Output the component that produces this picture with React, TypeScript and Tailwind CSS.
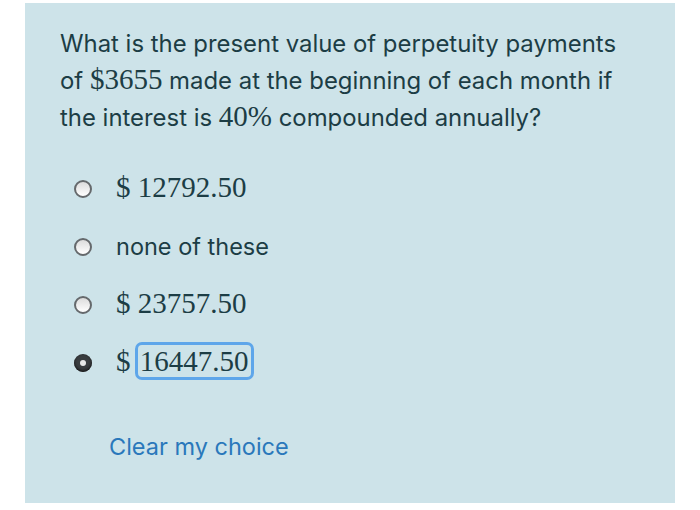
import React from "react";

const Num = ({ children }: { children: React.ReactNode }) => (
  <span className="font-['Liberation_Serif',serif] text-[29px] leading-none">{children}</span>
);

const Radio = ({ checked }: { checked?: boolean }) =>
  checked ? (
    <span className="flex h-[18px] w-[18px] shrink-0 items-center justify-center rounded-full bg-[#3a3d40] shadow-[inset_0_-1px_3px_#111]">
      <span className="h-[6px] w-[6px] rounded-full bg-[#e8e8e8]" />
    </span>
  ) : (
    <span className="h-[18px] w-[18px] shrink-0 rounded-full border-2 border-[#65696c] bg-gradient-to-b from-[#dcdcdc] to-[#ffffff]" />
  );

const options: { label: React.ReactNode; checked?: boolean }[] = [
  { label: <Num>$ 12792.50</Num> },
  { label: "none of these" },
  { label: <Num>$ 23757.50</Num> },
  {
    label: (
      <Num>
        ${" "}
        <span className="rounded-[4px] px-[2px] outline-[3px] outline-solid outline-[#5ea6ea]">
          16447.50
        </span>
      </Num>
    ),
    checked: true,
  },
];

export default function App() {
  return (
    <div className="h-[510px] w-[700px] bg-white pl-[25px] pt-[3px] font-['Inter',sans-serif]">
      <div className="h-[500px] w-[650px] bg-[#cde3e9] pl-[35px] pr-4 pt-[22px] text-[#1c3d45]">
        <p className="text-[23.9px] leading-[37px]">
          What is the present value of perpetuity payments
          <br />
          of <Num>$3655</Num> made at the beginning of each month if
          <br />
          the interest is <Num>40%</Num> compounded annually?
        </p>

        <div className="mt-[35px] flex flex-col gap-[22px] pl-[14px]">
          {options.map((o, i) => (
            <div key={i} className="flex h-9 items-center gap-[24px] text-[23.5px]">
              <Radio checked={o.checked} />
              <span>{o.label}</span>
            </div>
          ))}
        </div>

        <button className="mt-[48px] pl-[49px] text-[23.5px] text-[#2a78bb]">Clear my choice</button>
      </div>
    </div>
  );
}
